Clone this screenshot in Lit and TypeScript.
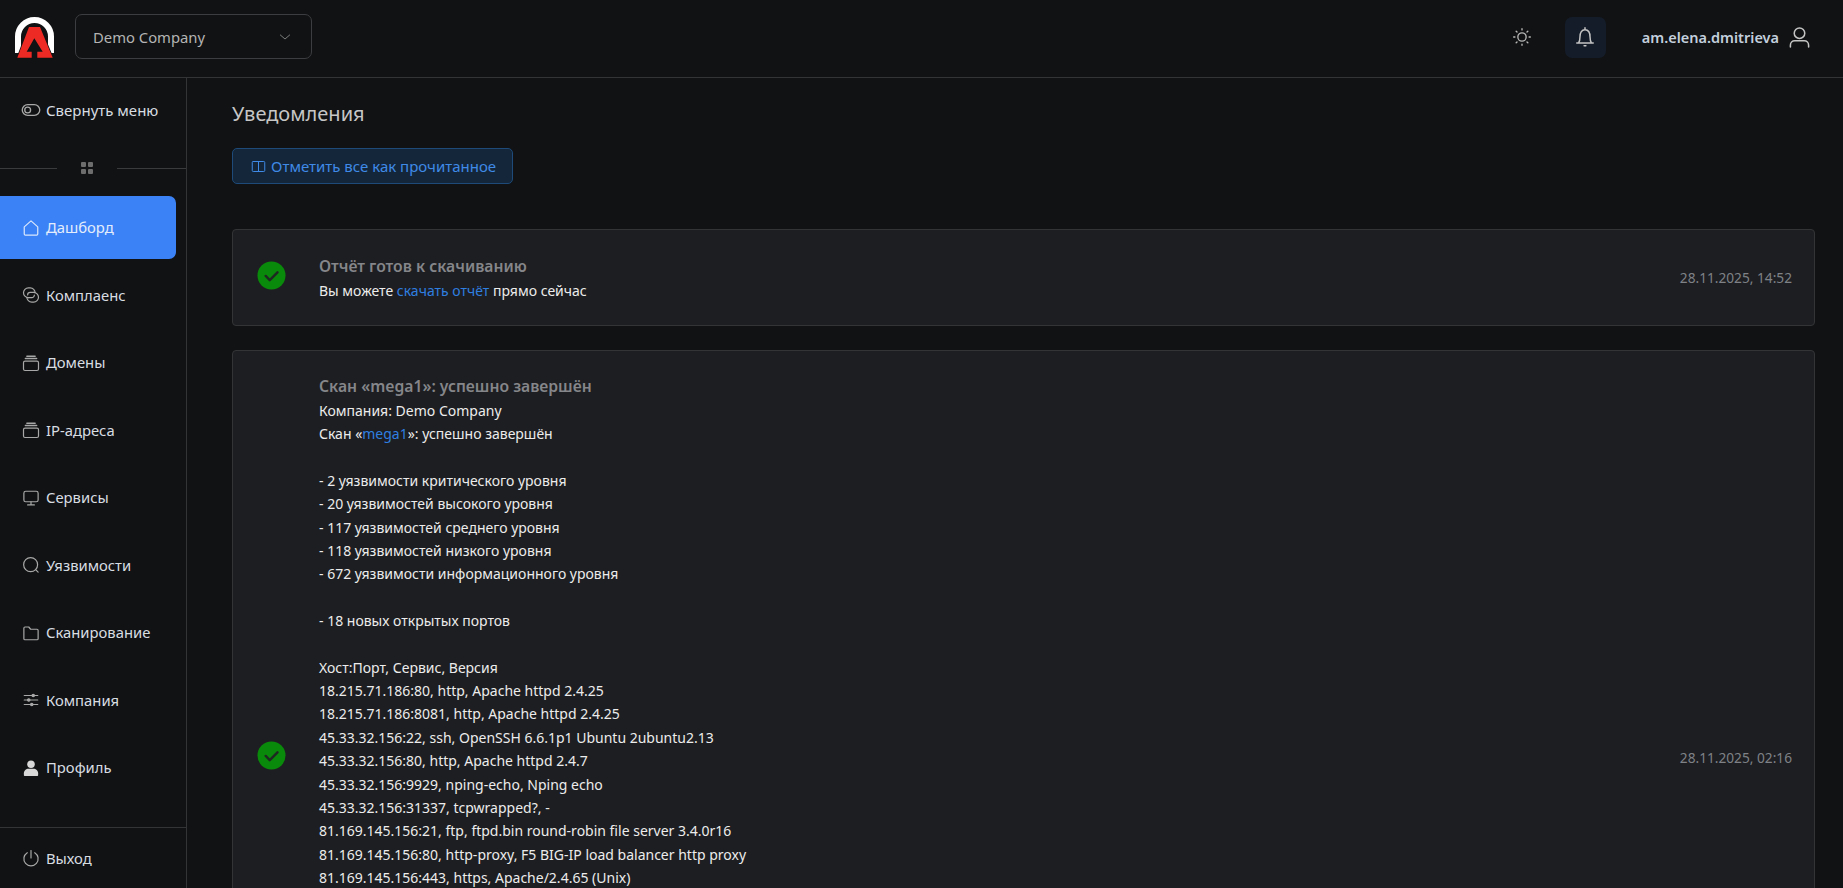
import { LitElement, html, css, svg } from "lit";
import { customElement } from "lit/decorators.js";

const ic = (p: unknown, vb = "0 0 24 24", cls = "ic") => html`<svg class=${cls} viewBox=${vb} fill="none" stroke="currentColor" stroke-width="1.6" stroke-linecap="round" stroke-linejoin="round">${p}</svg>`;

const stack = svg`<rect x="2" y="9.500" width="20" height="12.500" rx="2"/><path d="M4.500 6h15M6.500 3h11" stroke-width="2"/>`;
const nav: [string, unknown, boolean?][] = [
  ["Дашборд", svg`<path d="M3 10.500 12 2.500l9 8V20a1.500 1.500 0 0 1-1.500 1.500h-15A1.500 1.500 0 0 1 3 20Z"/>`, true],
  ["Комплаенс", svg`<path d="M8.500 15.500A6.500 6.500 0 0 1 8.500 2.500H11A6.500 6.500 0 0 1 17.500 9"/><path d="M15.500 8.500A6.500 6.500 0 0 1 15.500 21.500H13A6.500 6.500 0 0 1 6.500 15"/><path d="M8.500 15.500H13a3.500 3.500 0 0 0 3.500-3.500M15.500 8.500H11A3.500 3.500 0 0 0 7.500 12"/>`],
  ["Домены", stack],
  ["IP-адреса", stack],
  ["Сервисы", svg`<rect x="2.500" y="3" width="19" height="14" rx="2.500"/><path d="M12 17v4M7.500 21.200h9"/>`],
  ["Уязвимости", svg`<circle cx="11.500" cy="11.500" r="9.300"/><path d="m18.500 18.500 3 3"/>`],
  ["Сканирование", svg`<path d="M2.500 5.500A1.500 1.500 0 0 1 4 4h5l2.500 3H20a1.500 1.500 0 0 1 1.500 1.500v11A1.500 1.500 0 0 1 20 21H4a1.500 1.500 0 0 1-1.500-1.500Z"/>`],
  ["Компания", svg`<path d="M3 6h18M3 12h18M3 18h18"/><circle cx="15" cy="6" r="1.600" fill="currentColor"/><circle cx="9" cy="12" r="1.600" fill="currentColor"/><circle cx="13" cy="18" r="1.600" fill="currentColor"/>`],
  ["Профиль", svg`<circle cx="12" cy="7" r="5" fill="#d8d8d8" stroke="none"/><path d="M2.500 21.500v-2.500c0-3.500 3-6 6-6h7c3 0 6 2.500 6 6v2.500c0 .6-.4 1-1 1H3.500c-.6 0-1-.4-1-1Z" fill="#d8d8d8" stroke="none"/>`],
];

const lines = [
  "",
  "- 2 уязвимости критического уровня",
  "- 20 уязвимостей высокого уровня",
  "- 117 уязвимостей среднего уровня",
  "- 118 уязвимостей низкого уровня",
  "- 672 уязвимости информационного уровня",
  "",
  "- 18 новых открытых портов",
  "",
  "Хост:Порт, Сервис, Версия",
  "18.215.71.186:80, http, Apache httpd 2.4.25",
  "18.215.71.186:8081, http, Apache httpd 2.4.25",
  "45.33.32.156:22, ssh, OpenSSH 6.6.1p1 Ubuntu 2ubuntu2.13",
  "45.33.32.156:80, http, Apache httpd 2.4.7",
  "45.33.32.156:9929, nping-echo, Nping echo",
  "45.33.32.156:31337, tcpwrapped?, -",
  "81.169.145.156:21, ftp, ftpd.bin round-robin file server 3.4.0r16",
  "81.169.145.156:80, http-proxy, F5 BIG-IP load balancer http proxy",
  "81.169.145.156:443, https, Apache/2.4.65 (Unix)",
];

const check = html`<svg class="check" viewBox="0 0 30 30"><circle cx="15" cy="15" r="14.500" fill="#0a8a0a"/><path d="m9 15.500 4.200 4.200 8-8" fill="none" stroke="#1d2a22" stroke-width="2.600" stroke-linecap="round" stroke-linejoin="round"/></svg>`;

@customElement("app-root")
export class AppRoot extends LitElement {
  static styles = css`
    :host { display: flex; flex-direction: column; height: 100vh; overflow: hidden; background: #111213; color: #d8d8d8; font: 14px/1.4 "Noto Sans", "Open Sans", sans-serif; }
    * { box-sizing: border-box; }
    .top { flex: 0 0 78px; border-bottom: 1.500px solid #333436; display: flex; align-items: center; padding: 0 32px 3px 14px; }
    .logo { width: 41px; height: 44px; margin-right: 20px; }
    .select { width: 237px; height: 45px; border: 1px solid #3c3d40; border-radius: 7px; display: flex; align-items: center; justify-content: space-between; padding: 0 18px 0 17px; color: #b4b4b4; font-size: 14.800px; margin-top: -1px; }
    .select span { position: relative; top: 1px; }
    .chev { width: 16px; height: 16px; color: #8c8c8c; stroke-width: 1.300; }
    .grow { flex: 1; }
    .sun { width: 20px; height: 20px; color: #b8b8b8; margin-right: 33px; }
    .bell { width: 41px; height: 41px; background: #141c29; border-radius: 7px; display: flex; align-items: center; justify-content: center; color: #c4c4c4; margin-right: 36px; }
    .bell svg { width: 22px; height: 22px; }
    .user { font-weight: 600; font-size: 14.500px; color: #c3cfdd; margin-right: 9px; }
    .usericon { width: 23px; height: 23px; color: #c4c4c4; }
    .body { flex: 1; display: flex; min-height: 0; }
    .side { flex: 0 0 187px; border-right: 1.500px solid #333436; display: flex; flex-direction: column; min-height: 0; }
    .item { display: flex; align-items: center; gap: 6px; padding-left: 22px; color: #d8dde2; font-size: 14.800px; }
    .ic { width: 18px; height: 18px; flex: none; color: #a8a8a8; }
    .collapse { height: 64px; flex: none; font-size: 15px; }
    .collapse .ic { width: 20px; height: 20px; margin-left: -1px; margin-right: -1px; }
    .divider { display: flex; align-items: center; height: 24px; flex: none; margin: 14px 0 16px; }
    .divider i { height: 1px; background: #3a3b3d; }
    .divider i:first-child { width: 57px; }
    .divider i:last-child { flex: 1; }
    .divider span { width: 60px; display: flex; justify-content: center; }
    .grid { width: 12px; height: 12px; fill: #6d6d6d; }
    nav { display: flex; flex-direction: column; gap: 4.500px; }
    nav .item { height: 63px; width: 176px; border-radius: 0 7px 7px 0; }
    nav .item.on { background: #3b82f6; color: #e4edfb; }
    nav .item.on .ic { color: #dce8fb; }
    .exit { margin-top: auto; height: 61px; border-top: 1.500px solid #333436; flex: none; }
    .main { flex: 1; min-width: 0; padding: 18px 28px 0 45px; overflow: hidden; }
    h1 { margin: 0; font-size: 20px; font-weight: 400; line-height: 36px; color: #c6c6c6; }
    .btn { margin-top: 16px; width: 281px; height: 36px; background: #14263a; border: 1px solid #1d4a78; border-radius: 5px; display: flex; align-items: center; gap: 5px; padding-left: 18px; color: #3f8ae6; font-size: 15px; white-space: nowrap; }
    .btn .ic { width: 15px; height: 15px; color: #3f8ae6; }
    .card { background: #1d1e21; border: 1px solid #333436; border-radius: 4px; display: flex; align-items: center; padding: 0 22px 0 24px; margin-top: 24px; }
    .btn + .card { margin-top: 45px; }
    .check { width: 29px; height: 29px; flex: none; margin: 0 33px 5px 0; }
    .c1 { height: 97px; }
    .c2 { height: 816px; flex: none; align-items: center; }
    .c2 .txt { align-self: flex-start; padding-top: 22px; }
    .txt { flex: 1; min-width: 0; font-size: 14px; line-height: 23.350px; color: #ececec; }
    .ttl { font-size: 15.700px; font-weight: 600; color: #85868a; line-height: 26px; }
    a { color: #2f7fe0; text-decoration: none; }
    .ln { min-height: 23.350px; white-space: pre; }
    .date { color: #7f8287; font-size: 13.700px; white-space: nowrap; }
  `;

  render() {
    return html`
      <header class="top">
        <svg class="logo" viewBox="0 0 41 44">
          <path d="M4 38V21.500a16.500 16.500 0 0 1 33 0V38" fill="none" stroke="#fff" stroke-width="6"/>
          <path d="M3.300 42.700 15 12h11l12.700 30.700H23.300v-6h5.400L20.300 23.300 12.700 36.700h5v6Z" fill="#ee2a24" stroke="#111213" stroke-width="1.500" paint-order="stroke"/>
        </svg>
        <div class="select"><span>Demo Company</span>${ic(svg`<path d="m5 9 7 6 7-6"/>`, "0 0 24 24", "chev")}</div>
        <div class="grow"></div>
        ${ic(svg`<circle cx="12" cy="12" r="5"/><path d="M12 2v1.500M12 20.500V22M2 12h1.500M20.500 12H22M5 5l1 1M18 18l1 1M5 19l1-1M18 6l1-1"/>`, "0 0 24 24", "sun")}
        <div class="bell">${ic(svg`<path d="M3 18.500h18M5 18.500c1-1.500 1.500-3 1.500-6.500C6.500 7 8.500 4 12 4s5.500 3 5.500 8c0 3.500.5 5 1.500 6.500M12 2v2M11 21.500h2"/>`, "0 0 24 24", "bi")}</div>
        <span class="user">am.elena.dmitrieva</span>
        ${ic(svg`<circle cx="12" cy="7.500" r="5.500"/><path d="M2.500 22v-2c0-2.500 2-4.500 4.500-4.500h10c2.500 0 4.500 2 4.500 4.500v2"/>`, "0 0 24 24", "usericon")}
      </header>
      <div class="body">
        <aside class="side">
          <div class="item collapse">${ic(svg`<rect x="1.500" y="5.500" width="21" height="13" rx="6.500"/><circle cx="8" cy="12" r="3.500"/>`)}<span>Свернуть меню</span></div>
          <div class="divider"><i></i><span><svg class="grid" viewBox="0 0 12 12"><rect width="5" height="5" rx="1"/><rect x="7" width="5" height="5" rx="1"/><rect y="7" width="5" height="5" rx="1"/><rect x="7" y="7" width="5" height="5" rx="1"/></svg></span><i></i></div>
          <nav>
            ${nav.map(([t, p, on]) => html`<div class="item ${on ? "on" : ""}">${ic(p)}<span>${t}</span></div>`)}
          </nav>
          <div class="item exit">${ic(svg`<path d="M12 2v10"/><path d="M7 5a9.500 9.500 0 1 0 10 0"/>`)}<span>Выход</span></div>
        </aside>
        <main class="main">
          <h1>Уведомления</h1>
          <div class="btn">${ic(svg`<rect x="2" y="4" width="20" height="16" rx="1.500"/><path d="M12 4v16"/>`)}<span>Отметить все как прочитанное</span></div>
          <section class="card c1">
            ${check}
            <div class="txt">
              <div class="ttl">Отчёт готов к скачиванию</div>
              <div>Вы можете <a>скачать отчёт</a> прямо сейчас</div>
            </div>
            <div class="date">28.11.2025, 14:52</div>
          </section>
          <section class="card c2">
            ${check}
            <div class="txt">
              <div class="ttl">Скан «mega1»: успешно завершён</div>
              <div class="ln">Компания: Demo Company</div>
              <div class="ln">Скан «<a>mega1</a>»: успешно завершён</div>
              ${lines.map((l) => html`<div class="ln">${l}</div>`)}
            </div>
            <div class="date">28.11.2025, 02:16</div>
          </section>
        </main>
      </div>
    `;
  }
}
